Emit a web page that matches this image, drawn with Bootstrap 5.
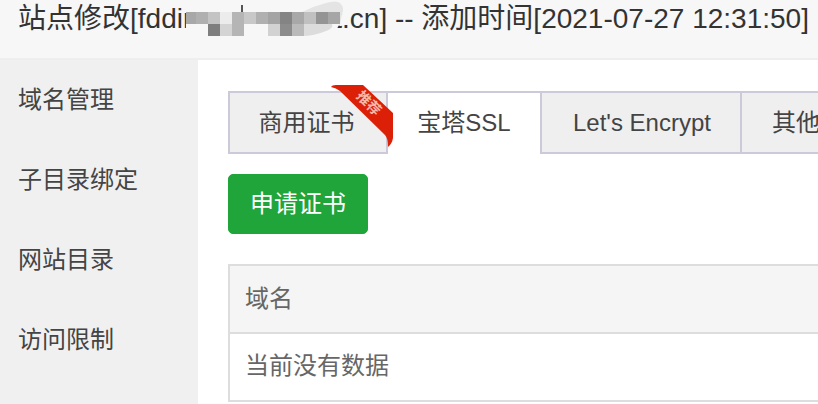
<!DOCTYPE html>
<html lang="zh-CN">
<head>
    <meta charset="UTF-8">
    <title>站点修改</title>
    <link rel="stylesheet" href="https://cdn.jsdelivr.net/npm/bootstrap@5.3.0/dist/css/bootstrap.min.css">
    <style>
        html, body {
            height: 404px;
            overflow: hidden;
        }
        body {
            width: 818px;
            background: #fff;
            color: #444;
            font-family: "Liberation Sans", "Noto Sans CJK SC", sans-serif;
        }
        .site-title {
            position: relative;
            height: 60px;
            padding-left: 18px;
            background: #f7f7f7;
            border-bottom: 2px solid #eee;
            font-size: 28px;
            line-height: 37px;
            white-space: nowrap;
            overflow: hidden;
            color: #333;
        }
        .blur-gap {
            display: inline-block;
            width: 142px;
        }
        .mosaic {
            position: absolute;
            left: 184px;
            top: 0;
        }
        .side-menu {
            width: 198px;
            flex: none;
            height: 344px;
            background: #f0f0f0;
        }
        .side-menu div {
            height: 80px;
            padding-left: 18px;
            font-size: 24px;
            line-height: 80px;
            color: #444;
        }
        .main-area {
            flex: 1;
            min-width: 0;
            padding: 31px 0 0 30px;
            overflow: hidden;
        }
        .tab-row {
            position: relative;
            display: flex;
            width: 640px;
            height: 63px;
            border-top: 2px solid #ccc9d9;
            border-bottom: 2px solid #ccc9d9;
        }
        .tab-row > span {
            flex: none;
            height: 59px;
            line-height: 60px;
            text-align: center;
            font-size: 24px;
            white-space: nowrap;
            background: #efefef;
            border-right: 2px solid #ccc9d9;
            color: #444;
        }
        .tab-row > .first-tab {
            width: 160px;
            padding-right: 3px;
            border-left: 2px solid #ccc9d9;
        }
        .tab-row > .on-tab {
            width: 154px;
            height: 61px;
            background: #fff;
        }
        .tab-row > .other-tab {
            width: 200px;
            padding-left: 2px;
        }
        .tab-row > .last-tab {
            width: 126px;
            padding-left: 30px;
            text-align: left;
            border-right: 0;
        }
        .ribbon {
            position: absolute;
            left: 100px;
            top: -8px;
        }
        .ribbon text {
            font-family: "Noto Sans CJK SC", sans-serif;
            font-size: 14px;
            font-weight: 700;
            fill: #f6b8aa;
        }
        .btn.apply-btn {
            display: block;
            width: 140px;
            height: 60px;
            margin-top: 20px;
            padding: 0;
            font-size: 24px;
            line-height: 58px;
            background: #20a53a;
            border-color: #20a53a;
            border-radius: 5px;
        }
        .domain-table {
            width: 640px;
            margin-top: 30px;
            border: 2px solid #ddd;
            border-right: 0;
            font-size: 24px;
            color: #666;
        }
        .domain-table div {
            padding-left: 15px;
        }
        .domain-table .head-row {
            height: 68px;
            line-height: 65px;
            background: #f5f5f5;
            border-bottom: 2px solid #ddd;
        }
        .domain-table .body-row {
            height: 66px;
            line-height: 64px;
        }
    </style>
</head>
<body>
    <div class="site-title">站点修改[fddir<span class="blur-gap"></span>t.cn] -- 添加时间[2021-07-27 12:31:50]
        <svg class="mosaic" width="170" height="40" viewBox="0 0 170 40">
            <path d="M2 12 L156 12 L156 24 L150 32 L130 36 L2 36 Z" fill="#f7f7f7"/>
            <path d="M118 12 Q130 6 142 3 Q152 0 156 3 Q161 8 158 14 L156 24 L118 24 Z" fill="#e4e4e4"/>
            <path d="M118 24 L148 24 Q150 28 142 31 Q130 36 118 36 Z" fill="#dcdcdc"/>
            <rect x="2" y="12" width="10" height="12" fill="#a8a8a8"/>
            <rect x="12" y="12" width="12" height="12" fill="#b0b0b0"/>
            <rect x="24" y="12" width="12" height="12" fill="#c4c4c4"/>
            <rect x="36" y="12" width="12" height="12" fill="#ececec"/>
            <rect x="48" y="12" width="12" height="24" fill="#b5b5b5"/>
            <rect x="60" y="12" width="12" height="12" fill="#c8c8c8"/>
            <rect x="72" y="12" width="12" height="12" fill="#b0b0b0"/>
            <rect x="84" y="12" width="12" height="12" fill="#a4a4a4"/>
            <rect x="96" y="12" width="12" height="12" fill="#848484"/>
            <rect x="108" y="12" width="12" height="12" fill="#a8a8a8"/>
            <rect x="120" y="12" width="12" height="12" fill="#c0c0c0"/>
            <rect x="132" y="12" width="12" height="12" fill="#949494"/>
            <rect x="144" y="12" width="12" height="12" fill="#a6a6a6"/>
            <rect x="24" y="24" width="12" height="12" fill="#7e7e7e"/>
            <rect x="36" y="24" width="12" height="12" fill="#d4d4d4"/>
            <rect x="84" y="24" width="12" height="12" fill="#d2d2d2"/>
            <rect x="96" y="24" width="12" height="12" fill="#8c8c8c"/>
            <rect x="108" y="24" width="12" height="12" fill="#bababa"/>
            <rect x="57" y="5" width="2" height="7" fill="#555"/>
        </svg>
    </div>
    <div class="d-flex">
        <div class="side-menu">
            <div>域名管理</div>
            <div>子目录绑定</div>
            <div>网站目录</div>
            <div>访问限制</div>
        </div>
        <div class="main-area">
            <div class="tab-row">
                <span class="first-tab">商用证书</span>
                <span class="on-tab">宝塔SSL</span>
                <span class="other-tab">Let's Encrypt</span>
                <span class="last-tab">其他证书</span>
                <svg class="ribbon" width="66" height="64" viewBox="0 0 66 64">
                    <path d="M3 2 Q4 0 8 0 L35 0 L65 28 L65 53 Q64 59 60 62 Q60 53 57 50 L12 6 Q8 3 3 2 Z" fill="#dc2008"/>
                    <text transform="translate(41 18) rotate(45)" text-anchor="middle" y="5">推荐</text>
                </svg>
            </div>
            <button type="button" class="btn btn-success apply-btn">申请证书</button>
            <div class="domain-table">
                <div class="head-row">域名</div>
                <div class="body-row">当前没有数据</div>
            </div>
        </div>
    </div>
</body>
</html>
